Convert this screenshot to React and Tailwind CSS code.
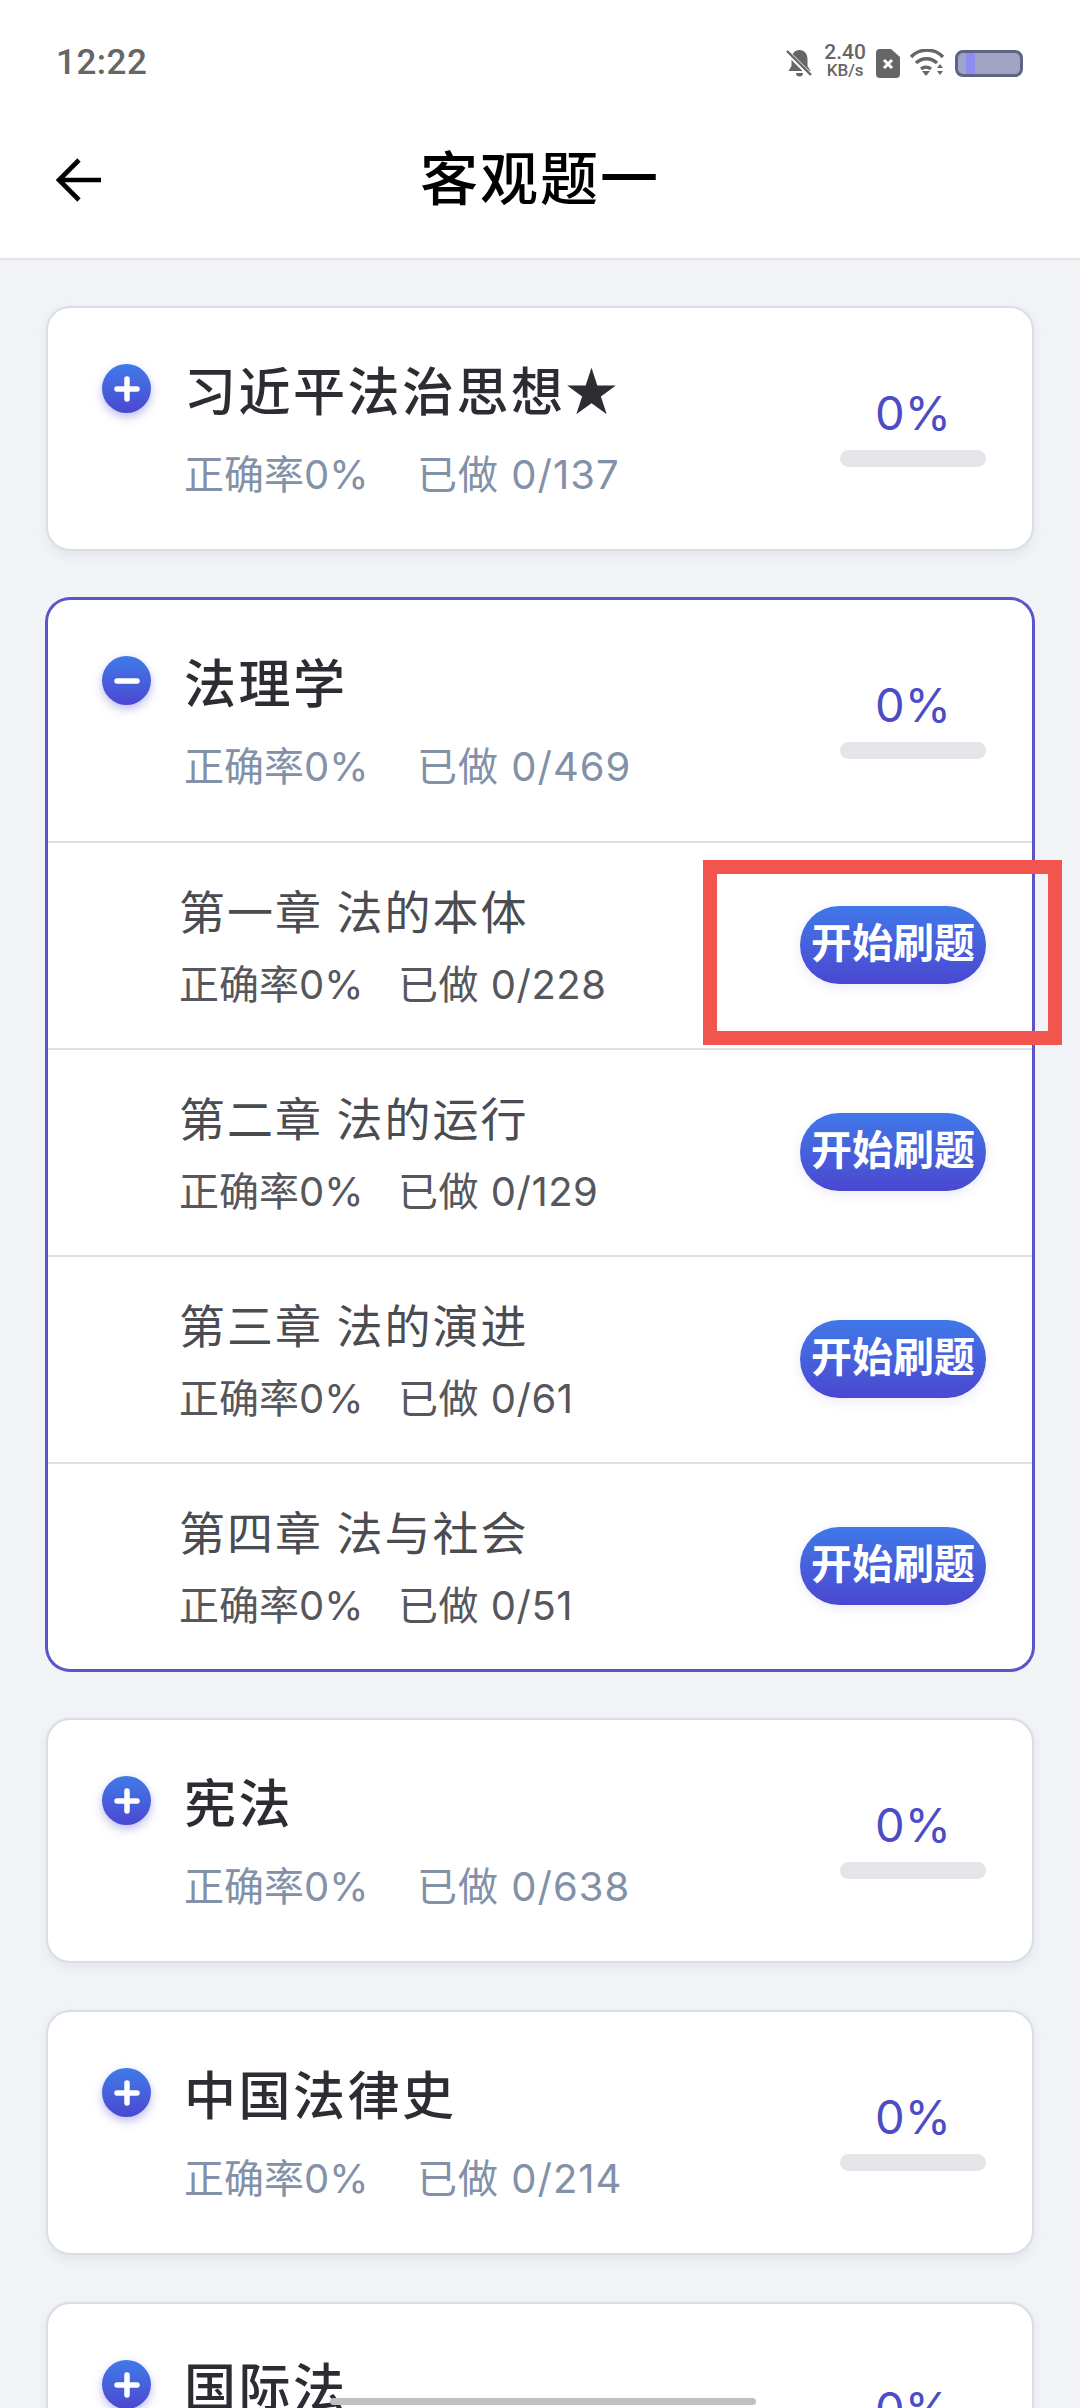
import React from 'react';

const font = { fontFamily: 'Roboto, "Noto Sans CJK SC", sans-serif' };
const digits = { fontFamily: 'Inter, "Noto Sans CJK SC", sans-serif' };

const sections = [
    { name: '习近平法治思想★', rate: '0%', done: '0/137' },
    {
        name: '法理学',
        rate: '0%',
        done: '0/469',
        open: true,
        chapters: [
            { name: '第一章 法的本体', done: '0/228' },
            { name: '第二章 法的运行', done: '0/129' },
            { name: '第三章 法的演进', done: '0/61' },
            { name: '第四章 法与社会', done: '0/51' },
        ],
    },
    { name: '宪法', rate: '0%', done: '0/638' },
    { name: '中国法律史', rate: '0%', done: '0/214' },
    { name: '国际法', rate: '0%', done: '0/320' },
];

const StatusBar = () => (
    <div className="h-[100px] pt-[44px] pl-[56px] pr-[57px] flex items-start justify-between">
        <span className="text-[35px] leading-[38px] text-[#666666] tracking-[0.5px] font-medium">12:22</span>
        <div className="flex items-center gap-[10px] mt-[3px]">
            <svg width="27" height="30" viewBox="0 0 27 30" className="mr-[1px]">
                <path d="M13.5 2c-5 0-8 4-8 9v7l-3 5h22l-3-5v-7c0-5-3-9-8-9z" fill="#666666" />
                <path d="M10 25a3.5 3.5 0 0 0 7 0z" fill="#666666" />
                <path d="M1 4l24 24" stroke="#ffffff" strokeWidth="5" />
                <path d="M1 3l24 24" stroke="#666666" strokeWidth="2.4" />
            </svg>
            <div className="flex flex-col items-center text-[#666666] font-medium -mt-[5px]">
                <span className="text-[21px] leading-[20px]">2.40</span>
                <span className="text-[17px] leading-[17px]">KB/s</span>
            </div>
            <svg width="24" height="29" viewBox="0 0 24 29">
                <path d="M4 0h11l9 8v17a4 4 0 0 1-4 4H4a4 4 0 0 1-4-4V4a4 4 0 0 1 4-4z" fill="#666666" />
                <path d="M8 11l8 8M16 11l-8 8" stroke="#ffffff" strokeWidth="3" />
            </svg>
            <svg width="35" height="28" viewBox="0 0 35 28">
                <path d="M1 8a22 22 0 0 1 32 0" fill="none" stroke="#666666" strokeWidth="3.4" />
                <path d="M6 14a15 15 0 0 1 21 0" fill="none" stroke="#666666" strokeWidth="3.4" />
                <path d="M11 20a8 8 0 0 1 10 0" fill="none" stroke="#666666" strokeWidth="3.4" />
                <path d="M12 22h8l-4 5z" fill="#666666" />
                <path d="M30 15l3 4h-6zM27 22h6l-3 4z" fill="#666666" />
            </svg>
            <div className="w-[68px] h-[27px] rounded-[8px] border-[3px] border-[#5d6484] bg-[#a0a3c4] overflow-hidden flex">
                <div className="w-[9px] ml-[8px] bg-[#8f8cf0]" />
            </div>
        </div>
    </div>
);

const Header = () => (
    <div className="h-[160px] bg-white border-b-2 border-[#e3e4e6] flex items-center justify-center relative">
        <svg width="48" height="48" viewBox="0 0 48 48" className="absolute left-[55px] top-[56px]">
            <path d="M46 24H5M24 4L4 24l20 20" fill="none" stroke="#000000" strokeWidth="4.6" />
        </svg>
        <h1 className="text-[58px] leading-[60px] font-medium text-black tracking-[2px] mt-[2px]">客观题一</h1>
    </div>
);

const Toggle = ({ open }) => (
    <div className="w-[49px] h-[49px] rounded-full bg-gradient-to-b from-[#3f7ae9] to-[#4a47d0] shadow-[0_4px_10px_rgba(74,67,205,0.35)] flex items-center justify-center shrink-0">
        <svg width="28" height="28" viewBox="0 0 28 28">
            <path d="M4 14h20" stroke="#ffffff" strokeWidth="5.5" strokeLinecap="round" />
            {!open && <path d="M14 4v20" stroke="#ffffff" strokeWidth="5.5" strokeLinecap="round" />}
        </svg>
    </div>
);

const SectionHead = ({ section }) => (
    <div className="h-[241px] flex pl-[54px] pr-[46px] shrink-0">
        <div className="mt-[56px]">
            <Toggle open={section.open} />
        </div>
        <div className="flex-1 ml-[33px] min-w-0">
            <div className="mt-[51px] text-[52px] leading-[70px] font-medium text-[#2b2d33] tracking-[2.5px] whitespace-nowrap">
                {section.name}
            </div>
            <div style={digits} className="mt-[21px] flex text-[40px] leading-[50px] text-[#8291a8] whitespace-nowrap">
                <span className="w-[233px]">正确率{section.rate}</span>
                <span className="tracking-[1px]">已做 {section.done}</span>
            </div>
        </div>
        <div className="w-[146px] mt-[75px] shrink-0 flex flex-col items-center">
            <div style={digits} className="text-[47px] leading-[60px] text-[#4c4cc6]">0%</div>
            <div className="w-[146px] h-[17px] mt-[7px] rounded-full bg-[#e4e5e9]" />
        </div>
    </div>
);

const ChapterRow = ({ chapter }) => (
    <div className="h-[207px] border-t-2 border-[#dfe0e4] flex items-center pl-[131px] pr-[46px]">
        <div className="flex-1 min-w-0 mt-[1px]">
            <div className="text-[46px] leading-[60px] text-[#4a4c52] tracking-[2px] whitespace-nowrap">{chapter.name}</div>
            <div style={digits} className="mt-[17px] flex text-[40px] leading-[50px] text-[#55575c] whitespace-nowrap">
                <span className="w-[219px]">正确率0%</span>
                <span className="tracking-[0.5px]">已做 {chapter.done}</span>
            </div>
        </div>
        <button className="w-[186px] h-[78px] -mt-[2px] rounded-full bg-gradient-to-b from-[#3f78e8] to-[#4a47d0] shadow-[0_3px_12px_rgba(74,67,205,0.12)] text-white text-[41px] font-bold whitespace-nowrap">
            开始刷题
        </button>
    </div>
);

const Card = ({ section }) => (
    <div
        className={
            section.open
                ? 'bg-white rounded-[24px] border-2 border-[#5a55c8] ring-1 ring-[#5a55c8] flex flex-col overflow-hidden shrink-0'
                : 'bg-white rounded-[24px] border-2 border-[#d9dde5] shadow-[0_4px_12px_rgba(120,130,150,0.12)] flex flex-col shrink-0'
        }
    >
        <SectionHead section={section} />
        {section.chapters && section.chapters.map((c) => <ChapterRow key={c.name} chapter={c} />)}
    </div>
);

export default function App() {
    return (
        <div className="w-[1080px] h-[2408px] overflow-hidden relative bg-[#f1f3f7]" style={font}>
            <div className="bg-white">
                <StatusBar />
                <Header />
            </div>
            <div className="px-[46px] pt-[46px] flex flex-col gap-[47px]">
                {sections.map((s) => (
                    <Card key={s.name} section={s} />
                ))}
            </div>
            {/* annotation box */}
            <div className="absolute left-[703px] top-[860px] w-[359px] h-[185px] border-[14px] border-[#f2554d]" />
            <div className="absolute left-[330px] top-[2398px] w-[426px] h-[7px] rounded-full bg-[#c0c0c0]" />
        </div>
    );
}
